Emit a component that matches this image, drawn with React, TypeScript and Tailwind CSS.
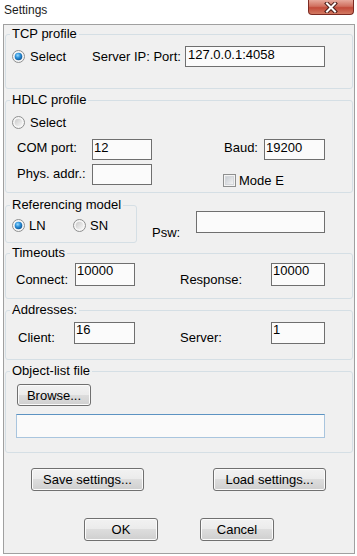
import type { ReactNode } from 'react';

function Radio({ checked = false }: { checked?: boolean }) {
  return (
    <svg width="13" height="13" viewBox="0 0 13 13" className="shrink-0">
      <defs>
        <linearGradient id="radioOff" x1="0" y1="0" x2="1" y2="1">
          <stop offset="0" stopColor="#c9c9c9" />
          <stop offset="1" stopColor="#f8f8f8" />
        </linearGradient>
        <radialGradient id="radioOn" cx="0.4" cy="0.35" r="0.75">
          <stop offset="0" stopColor="#9bdcff" />
          <stop offset="0.45" stopColor="#2b8fd8" />
          <stop offset="1" stopColor="#0b4a86" />
        </radialGradient>
      </defs>
      <circle cx="6.5" cy="6.5" r="6" fill="#f6f6f6" stroke="#8e8f8f" />
      <circle cx="6.5" cy="6.5" r="3.8" fill={checked ? 'url(#radioOn)' : 'url(#radioOff)'} />
    </svg>
  );
}

function Checkbox() {
  return (
    <svg width="13" height="13" viewBox="0 0 13 13" className="shrink-0">
      <defs>
        <linearGradient id="checkFill" x1="0" y1="0" x2="1" y2="1">
          <stop offset="0" stopColor="#c6cbd1" />
          <stop offset="1" stopColor="#f5f5f5" />
        </linearGradient>
      </defs>
      <rect x="0.5" y="0.5" width="12" height="12" fill="#f4f4f4" stroke="#8e8f8f" />
      <rect x="2.5" y="2.5" width="8" height="8" fill="url(#checkFill)" stroke="#d4d7db" />
    </svg>
  );
}

function GroupBox({ title, className, children }: { title: string; className: string; children?: ReactNode }) {
  return (
    <fieldset className={`border border-[#d5dfe5] rounded-[3px] ${className}`}>
      <legend className="ml-[4px] px-[2px] leading-[14px]">{title}</legend>
      {children}
    </fieldset>
  );
}

function TextBox({ value = '', className }: { value?: string; className: string }) {
  return (
    <div className={`shrink-0 border border-[#6f6f6f] bg-[#fbfbfb] pl-[1px] whitespace-nowrap ${className}`}>
      {value}
    </div>
  );
}

function Btn({ children, className }: { children: ReactNode; className: string }) {
  return (
    <button
      type="button"
      className={`flex shrink-0 items-center justify-center border border-[#707070] rounded-[3px] bg-[linear-gradient(to_bottom,#f2f2f2_0%,#ebebeb_50%,#dddddd_50%,#cfcfcf_100%)] shadow-[inset_0_0_0_1px_#fbfbfb] leading-[15px] ${className}`}
    >
      {children}
    </button>
  );
}

export default function App() {
  return (
    <div className="w-[357px] h-[556px] bg-white font-['Liberation_Sans',Arial,sans-serif] text-[13px] leading-[15px] text-black overflow-hidden">
      {/* title bar */}
      <div className="flex h-[24px]">
        <div className="pl-[4px] pt-[3px] text-[12px] leading-[14px] text-[#1b1b1b]">Settings</div>
        <div className="ml-auto mr-[3px] w-[46px] h-[15px] rounded-b-[4px] border border-t-0 border-[#7c2a22] bg-[linear-gradient(to_bottom,#e7a99c_0%,#d0705f_45%,#c24a39_55%,#d27a62_100%)] flex items-center justify-center">
          <svg width="14" height="11" viewBox="0 0 14 11">
            <path d="M3 1.5 L11 9.5 M11 1.5 L3 9.5" stroke="#4a1d18" strokeWidth="4" strokeLinecap="square" />
            <path d="M3 1.5 L11 9.5 M11 1.5 L3 9.5" stroke="#ffffff" strokeWidth="2" strokeLinecap="square" />
          </svg>
        </div>
      </div>

      {/* dialog body */}
      <div className="ml-[3px] w-[352px] h-[530px] border border-[#a0a0a0] bg-[#f0f0f0]">
        <GroupBox title="TCP profile" className="mt-[2px] ml-[1px] w-[348px] h-[62px]">
          <div className="mt-[5px] flex items-center h-[21px]">
            <div className="ml-[6px] w-[80px] flex items-center gap-[5px]">
              <Radio checked />
              Select
            </div>
            <div className="w-[93px]">Server IP: Port:</div>
            <TextBox value="127.0.0.1:4058" className="w-[140px] h-[21px] pl-[2px]" />
          </div>
        </GroupBox>

        <GroupBox title="HDLC profile" className="mt-[4px] ml-[1px] w-[348px] h-[100px]">
          <div className="mt-[8px] ml-[6px] h-[15px] flex items-center gap-[5px]">
            <Radio />
            Select
          </div>
          <div className="mt-[9px] flex items-start h-[21px]">
            <div className="ml-[11px] w-[75px] pt-[1px]">COM port:</div>
            <TextBox value="12" className="w-[60px] h-[21px]" />
            <div className="ml-[72px] w-[40px] pt-[1px]">Baud:</div>
            <TextBox value="19200" className="w-[61px] h-[21px]" />
          </div>
          <div className="mt-[4px] flex items-start">
            <div className="ml-[11px] w-[75px] pt-[2px]">Phys. addr.:</div>
            <TextBox className="w-[60px] h-[21px]" />
            <div className="ml-[71px] mt-[9px] flex items-center gap-[3px]">
              <Checkbox />
              Mode E
            </div>
          </div>
        </GroupBox>

        <div className="mt-[5px] flex items-start">
          <GroupBox title="Referencing model" className="ml-[1px] w-[132px] h-[45px]">
            <div className="mt-[6px] h-[15px] flex items-center">
              <div className="ml-[6px] w-[61px] flex items-center gap-[4px]">
                <Radio checked />
                LN
              </div>
              <div className="flex items-center gap-[4px]">
                <Radio />
                SN
              </div>
            </div>
          </GroupBox>
          <div className="ml-[15px] mt-[27px] w-[44px]">Psw:</div>
          <TextBox className="mt-[13px] w-[129px] h-[22px]" />
        </div>

        <GroupBox title="Timeouts" className="mt-[3px] ml-[1px] w-[348px] h-[53px]">
          <div className="flex items-start">
            <div className="ml-[10px] mt-[12px] w-[59px]">Connect:</div>
            <TextBox value="10000" className="mt-[3px] w-[60px] h-[23px] leading-[13px]" />
            <div className="ml-[45px] mt-[12px] w-[91px]">Response:</div>
            <TextBox value="10000" className="mt-[3px] w-[54px] h-[23px] leading-[13px]" />
          </div>
        </GroupBox>

        <GroupBox title="Addresses:" className="mt-[4px] ml-[1px] w-[348px] h-[57px]">
          <div className="flex items-start">
            <div className="ml-[12px] mt-[13px] w-[56px]">Client:</div>
            <TextBox value="16" className="mt-[5px] w-[61px] h-[22px] leading-[13px]" />
            <div className="ml-[45px] mt-[13px] w-[91px]">Server:</div>
            <TextBox value="1" className="mt-[5px] w-[54px] h-[22px] leading-[13px]" />
          </div>
        </GroupBox>

        <GroupBox title="Object-list file" className="mt-[4px] ml-[1px] w-[348px] h-[89px]">
          <Btn className="ml-[11px] mt-[6px] w-[74px] h-[22px]">Browse...</Btn>
          <div className="ml-[10px] mt-[8px] w-[309px] h-[24px] border border-[#a9c5de] border-t-[#5c93c2] bg-[#fafafa]" />
        </GroupBox>

        <div className="mt-[15px] flex">
          <Btn className="ml-[27px] w-[113px] h-[23px]">Save settings...</Btn>
          <Btn className="ml-[69px] w-[113px] h-[23px]">Load settings...</Btn>
        </div>
        <div className="mt-[27px] flex">
          <Btn className="ml-[80px] w-[74px] h-[23px]">OK</Btn>
          <Btn className="ml-[42px] w-[74px] h-[23px]">Cancel</Btn>
        </div>
      </div>
    </div>
  );
}
